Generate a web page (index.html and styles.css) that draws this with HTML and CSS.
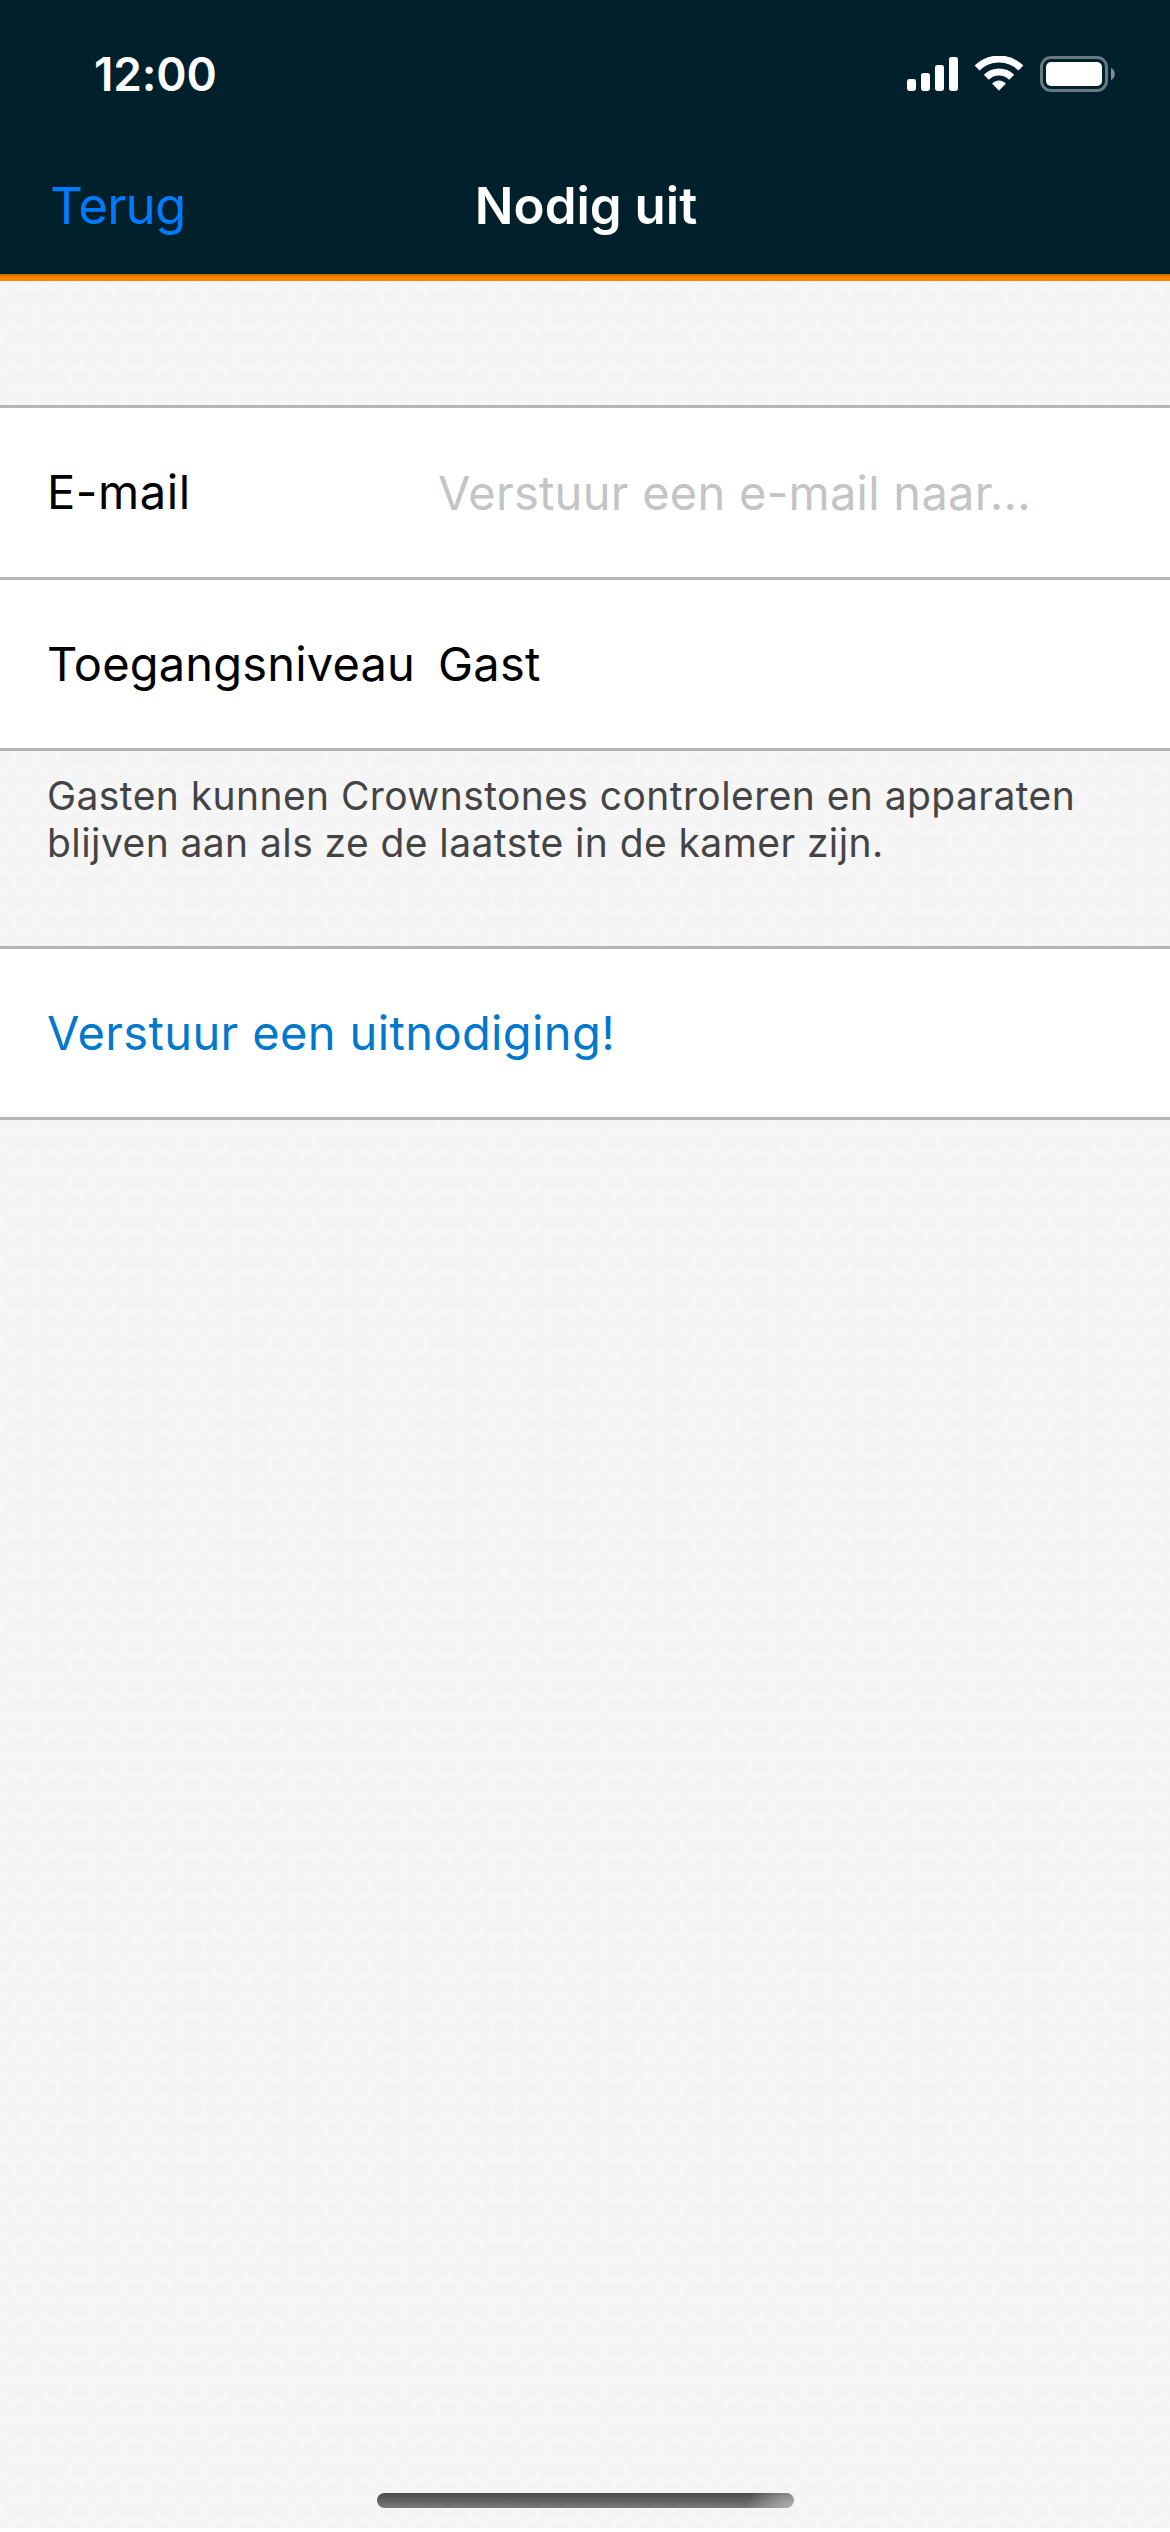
FILE: index.html
```html
<!DOCTYPE html>
<html lang="nl">
<head>
<meta charset="utf-8">
<title>Nodig uit</title>
<link rel="stylesheet" href="styles.css">
</head>
<body>
<div class="screen">
  <header class="header">
    <div class="status">
      <span class="time">12:00</span>
      <div class="indicators">
        <svg class="signal" width="51" height="36" viewBox="0 0 51 36" fill="#fff">
          <rect x="0" y="23" width="9" height="12" rx="2.4"/>
          <rect x="14" y="17" width="9" height="18" rx="2.4"/>
          <rect x="28" y="9" width="9" height="26" rx="2.4"/>
          <rect x="42" y="1" width="9" height="34" rx="2.4"/>
        </svg>
        <svg class="wifi" width="50" height="36" viewBox="0 0 50 36" fill="none" stroke="#fff">
          <path d="M3.1 12.1A31 31 0 0 1 46.9 12.1" stroke-width="7"/>
          <path d="M12.3 21.3A18 18 0 0 1 37.7 21.3" stroke-width="7"/>
          <path d="M25 34.2L18.6 27.6A9 9 0 0 1 31.4 27.6Z" fill="#fff" stroke-width="1" stroke-linejoin="round"/>
        </svg>
        <svg class="battery" width="75" height="36" viewBox="0 0 75 36">
          <rect x="1.5" y="1.5" width="65" height="33" rx="9.5" fill="none" stroke="#fff" stroke-opacity="0.4" stroke-width="3"/>
          <rect x="6" y="6" width="56" height="24" rx="5" fill="#fff"/>
          <path d="M71 12C76 14 76 22 71 24Z" fill="#fff" fill-opacity="0.5"/>
        </svg>
      </div>
    </div>
    <nav class="nav">
      <a class="back">Terug</a>
      <h1 class="title">Nodig uit</h1>
    </nav>
  </header>
  <main class="content">
    <section class="group">
      <label class="row">
        <span class="label label-email">E-mail</span>
        <input class="value" type="email" placeholder="Verstuur een e-mail naar...">
      </label>
      <div class="row">
        <span class="label">Toegangsniveau</span>
        <span class="value value-text">Gast</span>
      </div>
    </section>
    <p class="hint">Gasten kunnen Crownstones controleren en apparaten<br>blijven aan als ze de laatste in de kamer zijn.</p>
    <section class="group">
      <div class="row"><a class="action">Verstuur een uitnodiging!</a></div>
    </section>
    <div class="home-indicator"></div>
  </main>
</div>
</body>
</html>
```
FILE: styles.css
```css
* { box-sizing: border-box; }

body {
  margin: 0;
  background: #fff;
  font-family: Inter, "Liberation Sans", sans-serif;
  font-size: 47px;
  color: #000;
}

.screen {
  display: flex;
  flex-direction: column;
  width: 1170px;
  height: 2528px;
}

.header {
  flex: none;
  height: 281px;
  background: #00212b;
  border-bottom: 5px solid #ff8400;
  box-shadow: inset 0 -2px #cf7100;
}

.status {
  display: flex;
  align-items: center;
  justify-content: space-between;
  height: 138px;
  padding: 10px 55px 0 94px;
}

.time {
  font-size: 46px;
  font-weight: 600;
  letter-spacing: -0.15px;
  color: #fff;
}

.indicators { display: flex; align-items: center; }
.indicators svg { display: block; }
.wifi { margin-left: 16px; }
.battery { margin-left: 16px; }

.nav {
  display: grid;
  grid-template-columns: 1fr auto 1fr;
  align-items: center;
  height: 136px;
  padding: 0 48px 2px 50px;
  font-size: 51px;
}

.back { color: #007aff; letter-spacing: -0.75px; }

.title {
  margin: 0;
  font-size: 51px;
  font-weight: 600;
  color: #fff;
}

/* Two staggered rows of faint dots make up the page texture. */
.content {
  flex: 1;
  display: flex;
  flex-direction: column;
  padding-top: 124px;
  background-color: #f6f6f6;
  background-image:
    radial-gradient(circle, #f4f4f4 6px, rgba(244, 244, 244, 0) 9px),
    radial-gradient(circle, #f4f4f4 6px, rgba(244, 244, 244, 0) 9px);
  background-size: 22.3px 40.25px;
  background-position: 2.35px -4.1px, 13.5px 16px;
}

.group {
  background: #fff;
  border-top: 3px solid #b5b5b5;
}

.row {
  display: flex;
  align-items: center;
  height: 171px;
  padding-left: 47px;
  border-bottom: 3px solid #b5b5b5;
}

.row:first-child:not(:last-child) { height: 172px; }

.label,
.value-text,
.action { padding-bottom: 2px; }

.label { width: 391px; letter-spacing: 0.17px; }
.label-email { letter-spacing: 0.6px; }

.value {
  flex: 1;
  border: 0;
  outline: 0;
  background: none;
  font: inherit;
  letter-spacing: 0.26px;
}

input.value { padding: 0; }

.value::placeholder { color: #c4c4c6; opacity: 1; }

.hint {
  height: 195px;
  margin: 0;
  padding: 20.5px 0 0 47px;
  font-size: 39px;
  line-height: 47.7px;
  letter-spacing: 0.42px;
  color: #444;
}

.action { color: #0078cc; letter-spacing: 0.38px; }

.home-indicator {
  width: 417px;
  height: 15px;
  margin: auto auto 20px;
  border-radius: 7.5px;
  background:
    radial-gradient(ellipse 48px 32px at 100% 100%, #b4b4b4, rgba(180, 180, 180, 0)),
    linear-gradient(#4a4a4a, #797979);
}
```
